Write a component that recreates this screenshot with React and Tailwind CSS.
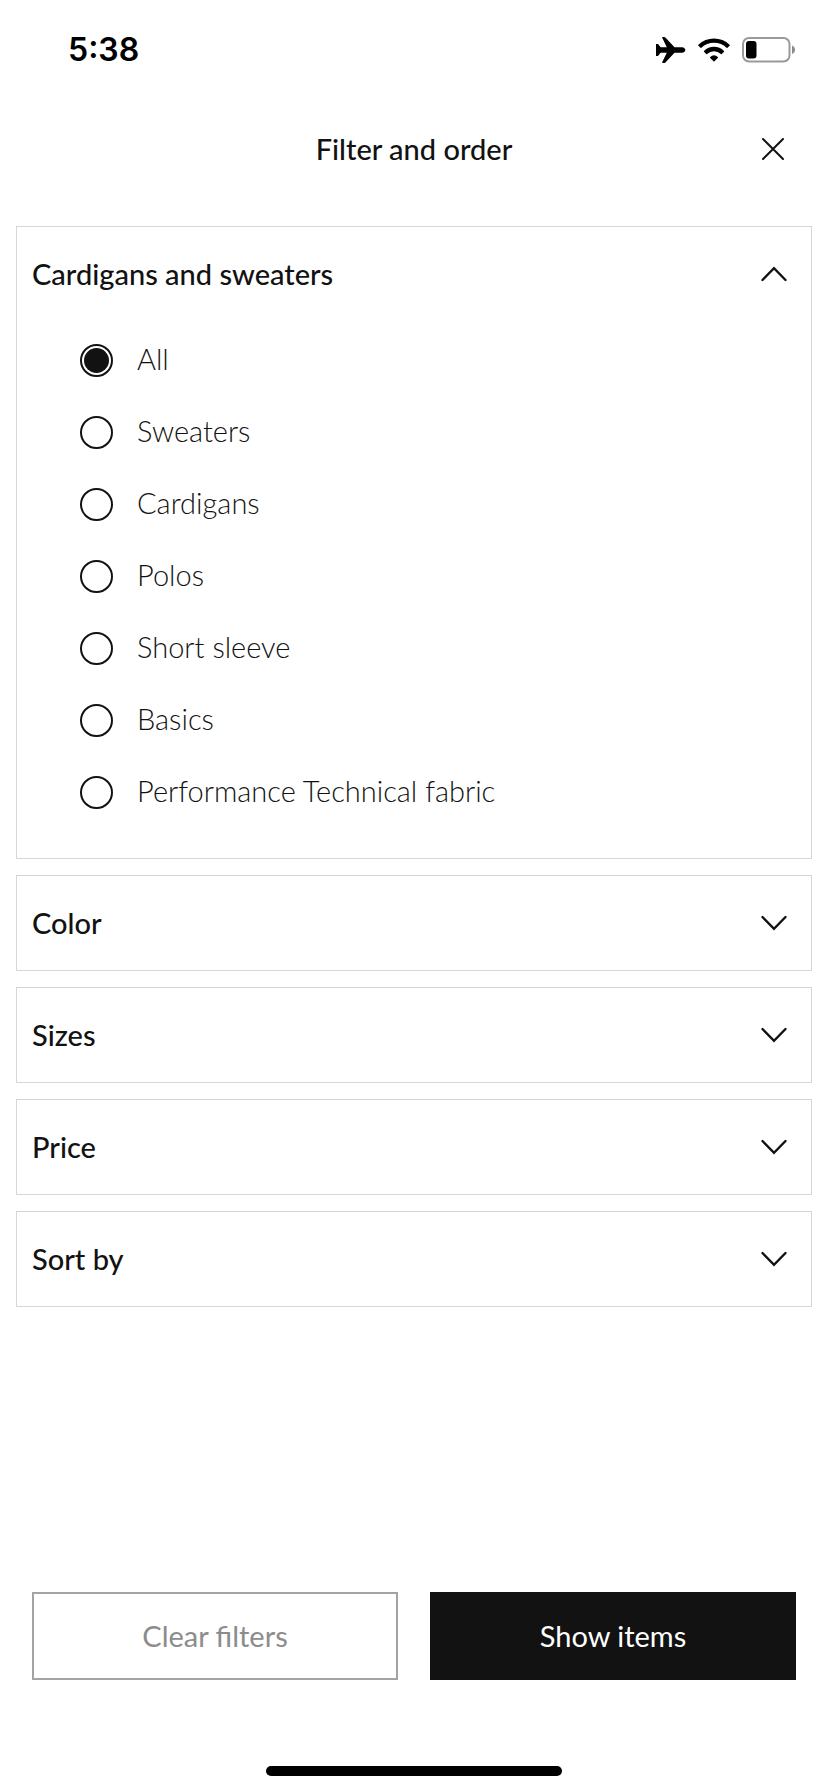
import React, { useState } from "react";

const categories = [
  "All",
  "Sweaters",
  "Cardigans",
  "Polos",
  "Short sleeve",
  "Basics",
  "Performance Technical fabric",
];

const Chevron = ({ up }) => (
  <svg width="26" height="16" viewBox="0 0 26 16" fill="none" stroke="currentColor" strokeWidth="2.4" strokeLinecap="round" aria-hidden="true">
    {up ? <path d="M1.5 14 13 2.2l11.5 11.8" /> : <path d="M1.5 2 13 13.8 24.5 2" />}
  </svg>
);

const StatusBar = () => (
  <div className="h-[100px] flex items-center justify-between pl-[68px] pr-8 text-black">
    <span className="font-[Inter,sans-serif] font-semibold text-[32px] leading-10">5:38</span>
    <div className="flex items-center gap-3">
      <svg width="30" height="26" viewBox="0 0 30 26" fill="currentColor" aria-hidden="true">
        <path d="M0 7h2l2.6 3.2 6.200 0L6.300 1C6 .4 6.300 0 6.900 0h1.300c.5 0 .8.2 1.200.6L18.500 10.200l7.500.1c2.200.2 3.300 1.300 3.300 2.700s-1.100 2.500-3.300 2.700l-7.500.1-9.100 9.600c-.4.4-.7.6-1.200.6H6.900c-.6 0-.9-.4-.6-1l4.500-9.200-6.200 0L2 19H0z" />
      </svg>
      <svg width="32" height="24" viewBox="0 0 32 24" fill="currentColor" aria-hidden="true">
        <path d="M.4 6.8a22.4 22.4 0 0 1 31.2 0c.3.3.3.6 0 .9l-2.100 2.100c-.3.3-.6.3-.9 0a18 18 0 0 0-25.200 0c-.3.3-.6.3-.9 0L.4 7.700c-.3-.3-.3-.6 0-.9z" />
        <path d="M6 12.900a14.400 14.400 0 0 1 20 0c.3.3.3.6 0 .9l-2.200 2.100c-.3.3-.6.3-.9 0a10 10 0 0 0-13.800 0c-.3.3-.6.3-.9 0L6 13.800c-.3-.3-.3-.6 0-.9z" />
        <path d="M12.200 19a5.800 5.800 0 0 1 7.600 0c.3.3.3.6 0 .9L16.500 23.200c-.3.3-.7.3-1 0L12.200 19.900c-.3-.3-.3-.6 0-.9z" />
      </svg>
      <svg width="54" height="26" viewBox="0 0 54 26" aria-hidden="true">
        <rect x="1" y="1" width="46.5" height="23.5" rx="6" fill="none" stroke="#999" strokeWidth="2" />
        <rect x="4" y="4" width="10.5" height="17.5" rx="3" fill="currentColor" />
        <path d="M50 8.500c2 .8 3 2.400 3 4.300s-1 3.500-3 4.300z" fill="#8a8a8a" />
      </svg>
    </div>
  </div>
);

const Section = ({ title, open, onToggle, children }) => (
  <section className="border border-[#d6d6d6]">
    <h2>
      <button
        type="button"
        aria-expanded={open}
        onClick={onToggle}
        className="w-full h-[94px] pl-[15px] pr-6 flex items-center justify-between font-medium text-[29px] leading-9"
      >
        {title}
        <Chevron up={open} />
      </button>
    </h2>
    {open && children}
  </section>
);

const App = () => {
  const [openSection, setOpenSection] = useState("Cardigans and sweaters");
  const [category, setCategory] = useState("All");
  const toggle = (name) => setOpenSection(openSection === name ? "" : name);

  return (
    <div className="min-h-screen flex flex-col bg-white text-[#121212] font-[Lato,sans-serif]">
      <StatusBar />

      <header className="h-[98px] px-8 grid grid-cols-[48px_1fr_48px] items-center">
        <h1 className="col-start-2 text-center font-medium text-[29px] leading-9">Filter and order</h1>
        <button type="button" aria-label="Close" className="h-12 pr-3 flex items-center justify-end">
          <svg width="22" height="22" viewBox="0 0 22 22" stroke="currentColor" strokeWidth="2" strokeLinecap="round" aria-hidden="true">
            <path d="M1 1l20 20M21 1 1 21" />
          </svg>
        </button>
      </header>

      <main className="grow px-4 pt-7 flex flex-col gap-4">
        <Section
          title="Cardigans and sweaters"
          open={openSection === "Cardigans and sweaters"}
          onToggle={() => toggle("Cardigans and sweaters")}
        >
          <div className="pt-[23px] pb-[49px] pl-[63px] flex flex-col gap-[39px]">
            {categories.map((c) => (
              <label key={c} className="h-[33px] flex items-start gap-6 font-light text-[29px] leading-[30px]">
                <input
                  type="radio"
                  name="category"
                  value={c}
                  checked={category === c}
                  onChange={() => setCategory(c)}
                  className="appearance-none shrink-0 size-[33px] rounded-full border-2 border-[#121212] p-[2px] bg-clip-content checked:bg-[#121212]"
                />
                {c}
              </label>
            ))}
          </div>
        </Section>
        {["Color", "Sizes", "Price", "Sort by"].map((name) => (
          <Section key={name} title={name} open={openSection === name} onToggle={() => toggle(name)} />
        ))}
      </main>

      <footer className="px-8 pb-4">
        <div className="grid grid-cols-2 gap-8">
          <button type="button" className="h-[88px] border-2 border-[#a3a3a3] text-[#8c8c8c] text-[29px] leading-9">
            Clear filters
          </button>
          <button type="button" className="h-[88px] bg-[#121212] text-white text-[29px] leading-9">
            Show items
          </button>
        </div>
        <div className="mt-[86px] mx-auto w-[296px] h-[10px] rounded-full bg-black" />
      </footer>
    </div>
  );
};

export default App;
